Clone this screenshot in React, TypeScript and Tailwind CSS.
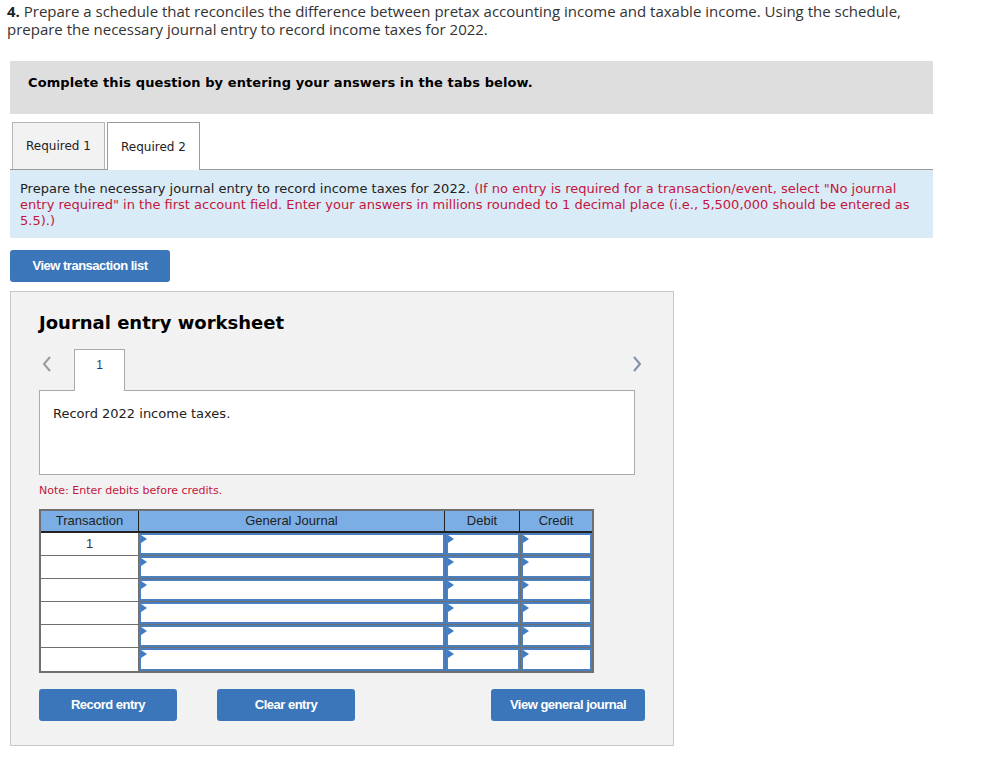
const verdana = { fontFamily: '"DejaVu Sans", Verdana, sans-serif' };

function Cell({ w }: { w: string }) {
  return (
    <div className={`${w} h-full bg-white border-2 border-[#4a7fc0] relative`}>
      <span className="absolute left-0 top-0 w-0 h-0 border-t-[4px] border-b-[4px] border-l-[6px] border-t-transparent border-b-transparent border-l-[#3f7cc6]" />
    </div>
  );
}

export default function App() {
  const rows = ['1', '', '', '', '', ''];

  return (
    <div className="w-[1008px] min-h-[763px] bg-white relative text-[#222]">
      <div className="pl-[7px] pt-[2px] text-[15px] leading-[18px] text-[#333] font-['Open_Sans',sans-serif]">
        <b className="text-[#222]">4.</b> Prepare a schedule that reconciles the difference between pretax accounting income and taxable income. Using the schedule,
        <br />
        prepare the necessary journal entry to record income taxes for 2022.
      </div>

      <div className="ml-[10px] mt-[23px] w-[923px] h-[53px] bg-[#dedede] pl-[18px] pt-[14px] text-[13px] leading-[16px]" style={verdana}>
        <span className="font-bold text-black tracking-[0.1px]">
          Complete this question by entering your answers in the tabs below.
        </span>
      </div>

      <div className="ml-[10px] mt-[8px] w-[923px] flex items-end border-b border-[#9a9a9a] h-[48px]" style={verdana}>
        <div className="ml-[2px] w-[93px] h-[47px] bg-[#f2f2f2] border border-b-0 border-[#b5b5b5] flex items-center justify-center text-[12px] text-[#222]">
          Required 1
        </div>
        <div className="ml-[2px] w-[93px] h-[48px] -mb-px bg-white border border-b-0 border-[#9a9a9a] flex items-center justify-center text-[12px] text-[#222]">
          Required 2
        </div>
      </div>

      <div className="ml-[10px] w-[923px] h-[68px] bg-[#daebf8] pl-[10px] pr-[8px] pt-[11px] text-[13px] leading-[16px] text-[#222]" style={verdana}>
        Prepare the necessary journal entry to record income taxes for 2022.{' '}
        <span className="text-[#c2163c]">
          (If no entry is required for a transaction/event, select "No journal entry required" in the first account field. Enter your answers in millions rounded to 1 decimal place (i.e., 5,500,000 should be entered as 5.5).)
        </span>
      </div>

      <button className="ml-[10px] mt-[12px] w-[160px] h-[32px] rounded-[3px] bg-[#3a76b9] text-white text-[13px] font-bold tracking-[-0.5px] font-['Liberation_Sans',Arial,sans-serif]">
        View transaction list
      </button>

      <div className="ml-[10px] mt-[9px] w-[664px] h-[455px] bg-[#f2f2f2] border border-[#c8c8c8] pl-[28px] pt-[18px]" style={verdana}>
        <div className="text-[18px] font-bold text-black leading-[26px]">Journal entry worksheet</div>

        <div className="mt-[13px] relative h-[41px] flex items-end">
          <svg className="absolute left-[3px] top-[7px]" width="10" height="16" viewBox="0 0 10 16">
            <path d="M8 1 L2 8 L8 15" stroke="#9a9a9a" strokeWidth="2" fill="none" />
          </svg>
          <div className="ml-[35px] w-[51px] h-[42px] -mb-px bg-white border border-b-0 border-[#aaa] relative z-10 flex justify-center pt-[6px] text-[12px] text-[#1a3d7a] font-['Liberation_Sans',Arial,sans-serif]">
            1
          </div>
          <svg className="absolute left-[593px] top-[7px]" width="10" height="16" viewBox="0 0 10 16">
            <path d="M2 1 L8 8 L2 15" stroke="#7f8fa6" strokeWidth="2" fill="none" />
          </svg>
        </div>

        <div className="w-[596px] h-[85px] bg-white border border-[#aaa] pl-[13px] pt-[13px] text-[13px] text-[#222]">
          Record 2022 income taxes.
        </div>

        <div className="mt-[8px] text-[11px] text-[#c2163c]">Note: Enter debits before credits.</div>

        <div className="mt-[9px] w-[555px] border-2 border-[#6f6f6f] font-['Liberation_Sans',Arial,sans-serif]">
          <div className="flex h-[22px] bg-[#7aaee5] text-[13px] text-[#222] border-b-2 border-[#222]">
            <div className="w-[98px] flex items-center justify-center border-r border-[#222]">Transaction</div>
            <div className="w-[306px] flex items-center justify-center border-r border-[#222]">General Journal</div>
            <div className="w-[75px] flex items-center justify-center border-r border-[#222]">Debit</div>
            <div className="flex-1 flex items-center justify-center">Credit</div>
          </div>
          {rows.map((r, i) => (
            <div key={i} className={`flex h-[23px] ${i < rows.length - 1 ? 'border-b border-[#6f6f6f]' : ''}`}>
              <div className="w-[98px] bg-white border-r border-[#6f6f6f] flex justify-center pt-[1px] text-[13px] text-[#333]">{r}</div>
              <Cell w="w-[306px]" />
              <div className="w-px bg-[#6f6f6f]" />
              <Cell w="w-[74px]" />
              <div className="w-px bg-[#6f6f6f]" />
              <Cell w="flex-1" />
            </div>
          ))}
        </div>

        <div className="mt-[16px] flex font-['Liberation_Sans',Arial,sans-serif] text-white text-[13px] font-bold tracking-[-0.5px]">
          <button className="w-[138px] h-[32px] rounded-[3px] bg-[#3a76b9]">Record entry</button>
          <button className="ml-[40px] w-[138px] h-[32px] rounded-[3px] bg-[#3a76b9]">Clear entry</button>
          <button className="ml-[136px] w-[154px] h-[32px] rounded-[3px] bg-[#3a76b9]">View general journal</button>
        </div>
      </div>
    </div>
  );
}
